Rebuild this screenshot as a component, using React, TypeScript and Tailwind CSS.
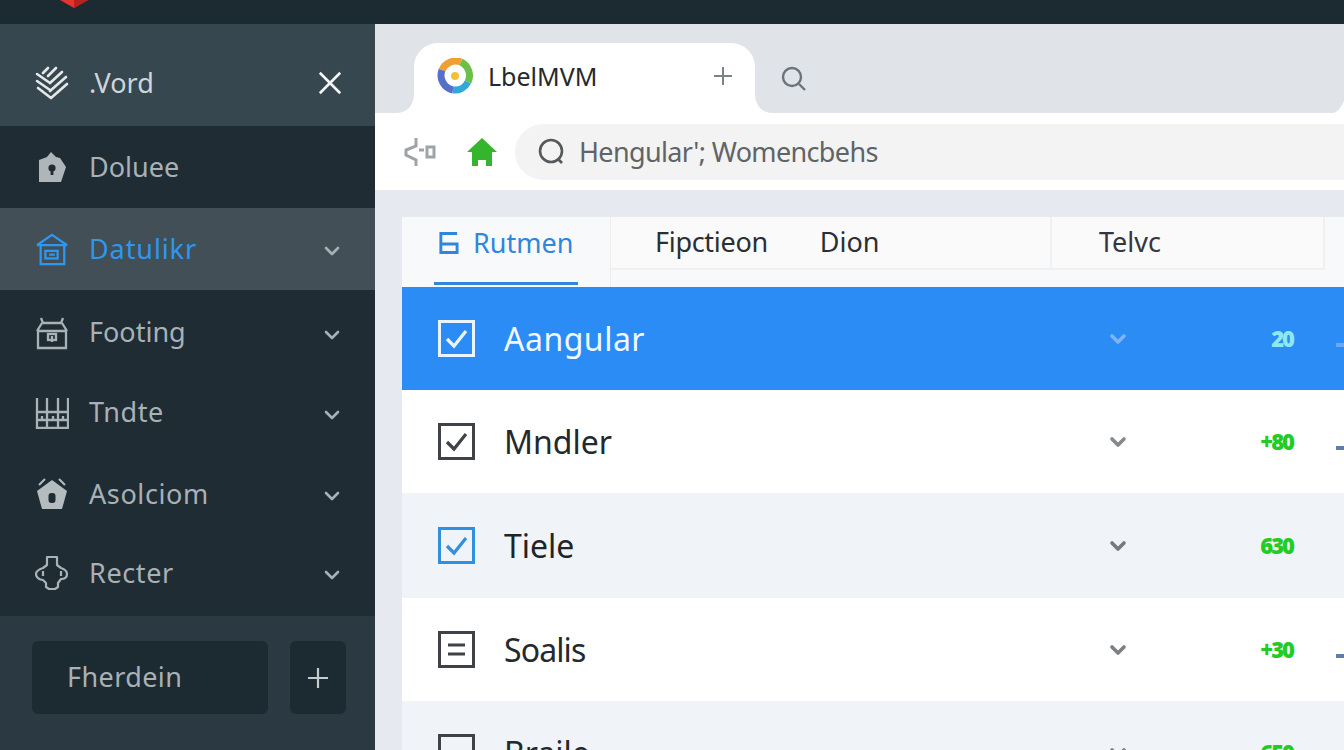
import React from "react";

function Chevron({ className, w = 2.6 }: { className: string; w?: number }) {
  return (
    <svg viewBox="0 0 18 12" className={className} fill="none" stroke="currentColor" strokeWidth={w} strokeLinecap="round" strokeLinejoin="round">
      <path d="M3 3l6 6 6-6" />
    </svg>
  );
}

function VordIcon() {
  return (
    <svg viewBox="0 0 34 34" className="w-[34px] h-[34px] text-[#e4e8ea]" fill="none" stroke="currentColor" strokeWidth="2.6" strokeLinecap="round">
      <path d="M2 8l13 9M2 15l13 9M3 22l13 10M16 32L32 18M15 25L31 11M15 17L27 6M13 10l8-8M8 7l5-5" />
    </svg>
  );
}

function DoluIcon() {
  return (
    <svg viewBox="0 0 32 34" className="w-[32px] h-[34px] text-[#aeb6ba]">
      <path fill="currentColor" d="M3 10l8-3 4-5 5 5 4 1 6 9-5 15H3z" />
      <circle cx="16" cy="18" r="3.6" fill="#1f2c34" />
      <rect x="14.6" y="20" width="2.8" height="5" fill="#1f2c34" />
    </svg>
  );
}

function DataIcon() {
  return (
    <svg viewBox="0 0 36 36" className="w-[36px] h-[36px] text-[#2f97ee]" fill="none" stroke="currentColor" strokeWidth="2.4">
      <path d="M2 14L18 3l16 11M2 14h32M6 14v20h25V14M6 34h25" />
      <rect x="11" y="20" width="13" height="8" />
      <path d="M15 24h6" />
    </svg>
  );
}

function FooIcon() {
  return (
    <svg viewBox="0 0 34 34" className="w-[34px] h-[34px] text-[#a9b2b7]" fill="none" stroke="currentColor" strokeWidth="2.3">
      <path d="M6 2l2 5h18l2-5M2 15l5-8M32 15l-5-8M2 15h30M3 15v17h28V15" />
      <rect x="13" y="18" width="8" height="6" />
      <path d="M17 20v6" />
    </svg>
  );
}

function GridIcon() {
  return (
    <svg viewBox="0 0 34 32" className="w-[34px] h-[32px] text-[#a9b2b7]" fill="none" stroke="currentColor" strokeWidth="2.3">
      <path d="M2 1v30h31V1M12 1v30M23 1v30M2 15h31M2 23h31M7 19v4M18 19v4M28 19v4" />
    </svg>
  );
}

function HouseIcon() {
  return (
    <svg viewBox="0 0 34 36" className="w-[34px] h-[36px] text-[#b4bcc0]">
      <path fill="none" stroke="currentColor" strokeWidth="2" d="M4 9l6-6M30 9l-6-6" />
      <path fill="currentColor" d="M17 4l15 11-5 18H7L2 15z" />
      <rect x="13.5" y="17" width="7" height="10" rx="3" fill="#1f2c34" />
    </svg>
  );
}

function PluginIcon() {
  return (
    <svg viewBox="0 0 34 36" className="w-[34px] h-[36px] text-[#a9b2b7]" fill="none" stroke="currentColor" strokeWidth="2.2" strokeLinejoin="round">
      <path d="M12 2h10v8l4 3c3 1 6 3 6 6s-2 5-6 5l-3 4v4l-3 2h-6l-3-2v-4l-3-3c-4 0-7-3-7-6s4-5 7-6l4-3z" />
      <path d="M26 16v5M8 16v5" />
    </svg>
  );
}

function SideRow({ icon, label, tall, track }: { icon: React.ReactNode; label: string; tall: string; track?: string }) {
  return (
    <div className={`flex items-center pl-[35px] pr-[32px] ${tall}`}>
      <div className="w-[34px] flex justify-center shrink-0">{icon}</div>
      <span className={`ml-[20px] flex-1 text-[27px] text-[#a8b1b6] ${track ?? ""}`}>{label}</span>
      <Chevron className="w-[18px] h-[12px] mt-[4px] mr-[2px] text-[#a8b1b6]" />
    </div>
  );
}

function CheckBox({ tone, kind }: { tone: string; kind: "check" | "lines" | "none" }) {
  return (
    <svg viewBox="0 0 37 37" className={`w-[37px] h-[37px] shrink-0 ${tone}`} fill="none" stroke="currentColor">
      <rect x="1.5" y="1.5" width="34" height="34" strokeWidth="3" />
      {kind === "check" && <path d="M9 19l7 7 12-15" strokeWidth="3.2" />}
      {kind === "lines" && <path d="M10 14h17M10 23h17" strokeWidth="3" />}
    </svg>
  );
}

function TableRow(p: {
  bg: string; text: string; box: string; kind: "check" | "lines" | "none"; name: string; track?: string;
  chev: string; value: string; valueTone: string; dash: string; h: string;
}) {
  return (
    <div className={`flex items-center shrink-0 pl-[36px] ${p.bg} ${p.h}`}>
      <CheckBox tone={p.box} kind={p.kind} />
      <span className={`ml-[29px] flex-1 text-[32px] ${p.text} ${p.track ?? ""}`}>{p.name}</span>
      <Chevron w={3.6} className={`w-[18px] h-[12px] ${p.chev}`} />
      <span className={`w-[40px] ml-[126px] text-right text-[22px] font-black tracking-[-2px] ${p.valueTone}`}>{p.value}</span>
      <div className={`w-[8px] h-[4px] ml-[43px] mt-[12px] ${p.dash}`} />
    </div>
  );
}

export default function App() {
  return (
    <div className="w-[1344px] h-[750px] overflow-hidden flex flex-col bg-[#e6e9f0]" style={{ fontFamily: '"Noto Sans", sans-serif' }}>
      <div className="h-[24px] shrink-0 bg-[#1c2a32] pl-[60px] overflow-hidden">
        <svg viewBox="0 0 28 8" className="w-[28px] h-[8px] block">
          <path fill="#e5342f" d="M0 0h28L14 8z" />
          <path fill="#b9211f" d="M14 0h14L14 8z" />
        </svg>
      </div>
      <div className="flex-1 flex min-h-0">
        <aside className="w-[375px] shrink-0 flex flex-col bg-[#1f2c34]">
          <div className="h-[102px] flex items-center bg-[#37474f] pt-[16px] pl-[35px] pr-[32px]">
            <VordIcon />
            <span className="ml-[20px] flex-1 text-[27px] text-[#cfd6d9]">.Vord</span>
            <svg viewBox="0 0 28 28" className="w-[26px] h-[26px] text-[#f2f4f5]" fill="none" stroke="currentColor" strokeWidth="2.8">
              <path d="M3 3l22 22M25 3L3 25" />
            </svg>
          </div>
          <div className="h-[82px] flex items-center pl-[35px]">
            <div className="w-[34px] flex justify-center"><DoluIcon /></div>
            <span className="ml-[20px] text-[27px] text-[#a8b1b6]">Doluee</span>
          </div>
          <div className="h-[82px] flex items-center bg-[#434f57] pl-[35px] pr-[32px]">
            <div className="w-[34px] flex justify-center"><DataIcon /></div>
            <span className="ml-[20px] flex-1 text-[27px] tracking-[0.9px] text-[#2f97ee]">Datulikr</span>
            <Chevron className="w-[18px] h-[12px] mt-[4px] mr-[2px] text-[#a8b1b6]" />
          </div>
          <SideRow icon={<FooIcon />} label="Footing" tall="h-[85px]" />
          <SideRow icon={<GridIcon />} label="Tndte" tall="h-[75px]" track="tracking-[0.6px]" />
          <SideRow icon={<HouseIcon />} label="Asolciom" tall="h-[88px]" track="tracking-[0.6px]" />
          <SideRow icon={<PluginIcon />} label="Recter" tall="h-[78px] pb-[8px]" track="tracking-[0.6px]" />
          <div className="flex-1 bg-[#2b3942] flex gap-[22px] pl-[32px] pt-[25px]">
            <div className="w-[236px] h-[73px] rounded-[6px] bg-[#1c2a32] flex items-center pl-[35px] text-[27px] tracking-[0.4px] text-[#a8b1b6]">Fherdein</div>
            <div className="w-[56px] h-[73px] rounded-[6px] bg-[#1c2a32] flex items-center justify-center">
              <svg viewBox="0 0 22 22" className="w-[22px] h-[22px] text-[#c4cbcf]" fill="none" stroke="currentColor" strokeWidth="2.2">
                <path d="M11 1v20M1 11h20" />
              </svg>
            </div>
          </div>
        </aside>
        <main className="flex-1 min-w-0 flex flex-col">
          <div className="relative h-[89px] shrink-0 bg-[#e0e3e8] pt-[19px] pl-[39px] flex">
            <div className="relative w-[341px] h-[70px] bg-white rounded-t-[24px] flex items-start pt-[15px] pl-[23px]">
              <svg viewBox="0 0 20 20" className="absolute left-[-18px] bottom-0 w-[20px] h-[20px]">
                <path fill="#ffffff" d="M20 0v20H0C10 20 18 14 18 0z" />
              </svg>
              <svg viewBox="0 0 20 20" className="absolute right-[-18px] bottom-0 w-[20px] h-[20px]">
                <path fill="#ffffff" d="M0 0v20h20C10 20 2 14 2 0z" />
              </svg>
              <svg viewBox="0 0 36 36" className="w-[36px] h-[36px]" fill="none" strokeWidth="7">
                <path stroke="#f0a030" d="M5 12A15 15 0 0 1 24 4" />
                <path stroke="#6cc04a" d="M24 4a15 15 0 0 1 7 20" />
                <path stroke="#33a8d8" d="M31 24a15 15 0 0 1-15 8" />
                <path stroke="#5570c8" d="M16 32A15 15 0 0 1 5 12" />
                <circle cx="18" cy="18" r="4" fill="#f2c038" />
              </svg>
              <span className="ml-[15px] mt-[2px] flex-1 text-[25px] leading-[32px] text-[#25292d]">LbelMVM</span>
              <svg viewBox="0 0 20 20" className="w-[20px] h-[20px] mt-[8px] mr-[22px] text-[#7b8287]" fill="none" stroke="currentColor" strokeWidth="2">
                <path d="M10 1v18M1 10h18" />
              </svg>
            </div>
            <svg viewBox="0 0 26 26" className="w-[26px] h-[26px] mt-[23px] ml-[26px] text-[#6d7479]" fill="none" stroke="currentColor" strokeWidth="2.4">
              <circle cx="11" cy="11" r="9" />
              <path d="M18 18l6 6" />
            </svg>
            <svg viewBox="0 0 12 12" className="absolute right-0 bottom-0 w-[12px] h-[12px]">
              <path fill="#ffffff" d="M12 0v12H0C6 12 9 6 12 0z" />
            </svg>
          </div>
          <div className="h-[77px] shrink-0 bg-white flex items-center pl-[28px]">
            <svg viewBox="0 0 34 34" className="w-[34px] h-[34px] text-[#9da3a6]" fill="none" stroke="currentColor" strokeWidth="3">
              <path d="M13 3v8L3 15v5l10 5v6M16 15h5M24 12h7v10h-7z" />
            </svg>
            <svg viewBox="0 0 32 30" className="w-[32px] h-[30px] ml-[29px] text-[#35b52e]">
              <path fill="currentColor" d="M16 1l15 14h-5v14h-6v-6h-8v6H6V15H1z" />
            </svg>
            <div className="ml-[17px] flex-1 h-[56px] rounded-l-[28px] bg-[#f3f3f3] flex items-center pl-[23px]">
              <svg viewBox="0 0 28 28" className="w-[28px] h-[28px] text-[#55595c]" fill="none" stroke="currentColor" strokeWidth="2.6">
                <circle cx="13" cy="13" r="11" />
                <path d="M20 21l4 4" />
              </svg>
              <span className="ml-[13px] mt-[2px] text-[27px] tracking-[-0.65px] text-[#5f6468]">Hengular'; Womencbehs</span>
            </div>
          </div>
          <div className="flex-1 min-h-0 pt-[27px] pl-[27px] flex flex-col">
            <div className="h-[70px] shrink-0 bg-[#f8f9fb] flex items-start">
              <div className="w-[209px] h-[70px] relative flex items-start pl-[36px] pt-[6px] border-r border-r-[#eceef1]">
                <svg viewBox="0 0 22 24" className="w-[21px] h-[24px] mt-[8px] text-[#2f86dc]" fill="none" stroke="currentColor" strokeWidth="3">
                  <path d="M20 2H3v20h17v-9H3" />
                </svg>
                <span className="ml-[14px] text-[27px] text-[#2f86dc]">Rutmen</span>
                <div className="absolute left-[32px] top-[65px] w-[144px] h-[3px] bg-[#2f86dc]" />
              </div>
              <div className="w-[441px] h-[53px] bg-[#fafafa] flex items-center pl-[44px] border-r-2 border-b-2 border-[#eef0f2] text-[27px] text-[#2b2f33]">
                <span className="tracking-[-0.3px]">Fipctieon</span>
                <span className="ml-[52px]">Dion</span>
              </div>
              <div className="w-[273px] h-[53px] bg-[#fafafa] flex items-center pl-[47px] border-r-2 border-b-2 border-[#eef0f2] text-[27px] text-[#34383c]">Telvc</div>
            </div>
            <TableRow h="h-[103px]" bg="bg-[#2b8cf6]" text="text-[#f2f8ff]" box="text-[#eaf4ff]" kind="check" name="Aangular" track="tracking-[0.5px]" chev="text-[#7db4f2]" value="20" valueTone="text-[#8de8f0]" dash="bg-[#6ca9ee]" />
            <TableRow h="h-[103px]" bg="bg-white" text="text-[#24292d]" box="text-[#3f4347]" kind="check" name="Mndler" chev="text-[#85888c]" value="+80" valueTone="text-[#22cc22]" dash="bg-[#5f7ea8]" />
            <TableRow h="h-[105px]" bg="bg-[#f0f3f8]" text="text-[#1f2427]" box="text-[#2f90e0]" kind="check" name="Tiele" chev="text-[#75787c]" value="630" valueTone="text-[#22cc22]" dash="bg-transparent" />
            <TableRow h="h-[103px]" bg="bg-white" text="text-[#24292d]" box="text-[#3f4347]" kind="lines" name="Soalis" track="tracking-[-0.9px]" chev="text-[#7c7f83]" value="+30" valueTone="text-[#22cc22]" dash="bg-[#5f7ea8]" />
            <TableRow h="h-[103px]" bg="bg-[#f0f3f8]" text="text-[#24292d]" box="text-[#3f4347]" kind="none" name="Braile" chev="text-[#7c7f83]" value="650" valueTone="text-[#22cc22]" dash="bg-transparent" />
          </div>
        </main>
      </div>
    </div>
  );
}
